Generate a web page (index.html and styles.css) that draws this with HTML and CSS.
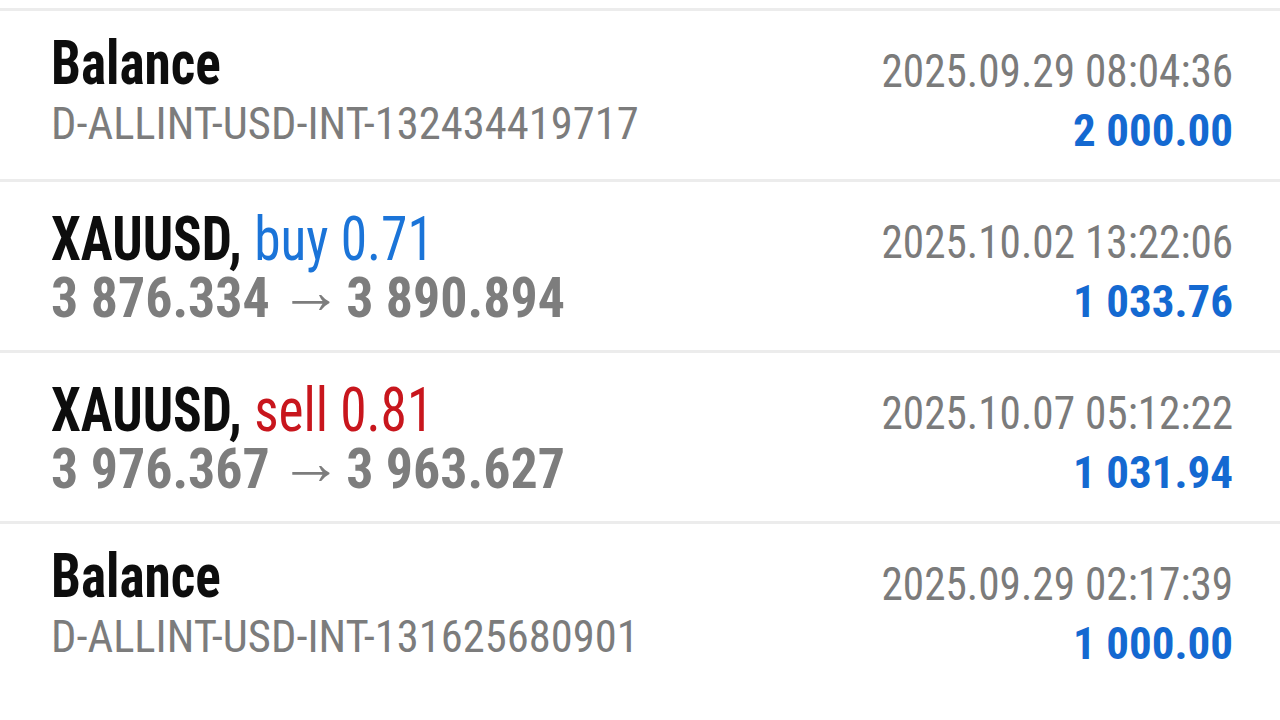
FILE: index.html
```html
<!DOCTYPE html>
<html lang="en">
<head>
  <meta charset="UTF-8">
  <meta name="viewport" content="width=device-width, initial-scale=1">
  <title>History</title>
  <link rel="stylesheet" href="styles.css">
</head>
<body>

<div class="history">
  <div class="deal balance">
    <div class="left">
      <div class="title"><span class="fit">Balance</span></div>
      <div class="sub"><span class="fit">D-ALLINT-USD-INT-132434419717</span></div>
    </div>
    <div class="right">
      <div class="time"><span class="fit">2025.09.29 08:04:36</span></div>
      <div class="profit"><span class="fit">2 000.00</span></div>
    </div>
  </div>

  <div class="deal">
    <div class="left">
      <div class="title"><span class="fit">XAUUSD, <span class="buy">buy 0.71</span></span></div>
      <div class="prices"><span class="fit">3 876.334<span class="arrow">&rarr;</span>3 890.894</span></div>
    </div>
    <div class="right">
      <div class="time"><span class="fit">2025.10.02 13:22:06</span></div>
      <div class="profit"><span class="fit">1 033.76</span></div>
    </div>
  </div>

  <div class="deal">
    <div class="left">
      <div class="title"><span class="fit">XAUUSD, <span class="sell">sell 0.81</span></span></div>
      <div class="prices"><span class="fit">3 976.367<span class="arrow">&rarr;</span>3 963.627</span></div>
    </div>
    <div class="right">
      <div class="time"><span class="fit">2025.10.07 05:12:22</span></div>
      <div class="profit"><span class="fit">1 031.94</span></div>
    </div>
  </div>

  <div class="deal balance">
    <div class="left">
      <div class="title"><span class="fit">Balance</span></div>
      <div class="sub"><span class="fit">D-ALLINT-USD-INT-131625680901</span></div>
    </div>
    <div class="right">
      <div class="time"><span class="fit">2025.09.29 02:17:39</span></div>
      <div class="profit"><span class="fit">1 000.00</span></div>
    </div>
  </div>
</div>

</body>
</html>
```

FILE: styles.css
```css
* {
  box-sizing: border-box;
  margin: 0;
  padding: 0;
}

body {
  font-family: Roboto, "Noto Sans", sans-serif;
  font-stretch: 75%;
  background-color: #fff;
  overflow: hidden;
}

.history {
  padding-top: 8px;
}

.deal {
  display: flex;
  justify-content: space-between;
  height: 171px;
  border-top: 3px solid #ececec;
  padding: 0 47px 0 51px;
}

.left,
.right {
  display: flex;
  flex-direction: column;
}

.right {
  align-items: flex-end;
}

.fit {
  display: inline-block;
  white-space: nowrap;
}

.title {
  font-size: 62px;
  font-weight: 700;
  color: #0d0d0d;
  line-height: 62px;
  margin-top: 26px;
}

.title .fit {
  transform: scaleX(0.86);
  transform-origin: left center;
}

.balance .title {
  margin-top: 21px;
}

.buy,
.sell {
  font-weight: 400;
}

.buy {
  color: #1b74d8;
}

.sell {
  color: #c8161d;
}

.sub {
  font-size: 45px;
  color: #7c7c7c;
  line-height: 60px;
}

.sub .fit {
  transform: scaleX(0.99);
  transform-origin: left center;
}

.prices {
  font-size: 55px;
  font-weight: 700;
  color: #7d7d7d;
  line-height: 56px;
}

.prices .fit {
  transform: scaleX(0.98);
  transform-origin: left center;
}

.arrow {
  font-weight: 400;
  font-size: 64px;
  line-height: 30px;
  padding: 0 4px 0 10px;
  vertical-align: 4px;
}

.time {
  font-size: 46px;
  color: #7b7b7b;
  line-height: 46px;
  margin-top: 37px;
}

.time .fit {
  transform: scaleX(0.94);
  transform-origin: right center;
}

.profit {
  font-size: 45px;
  font-weight: 700;
  color: #1469d1;
  line-height: 46px;
  margin-top: 14px;
}
```
